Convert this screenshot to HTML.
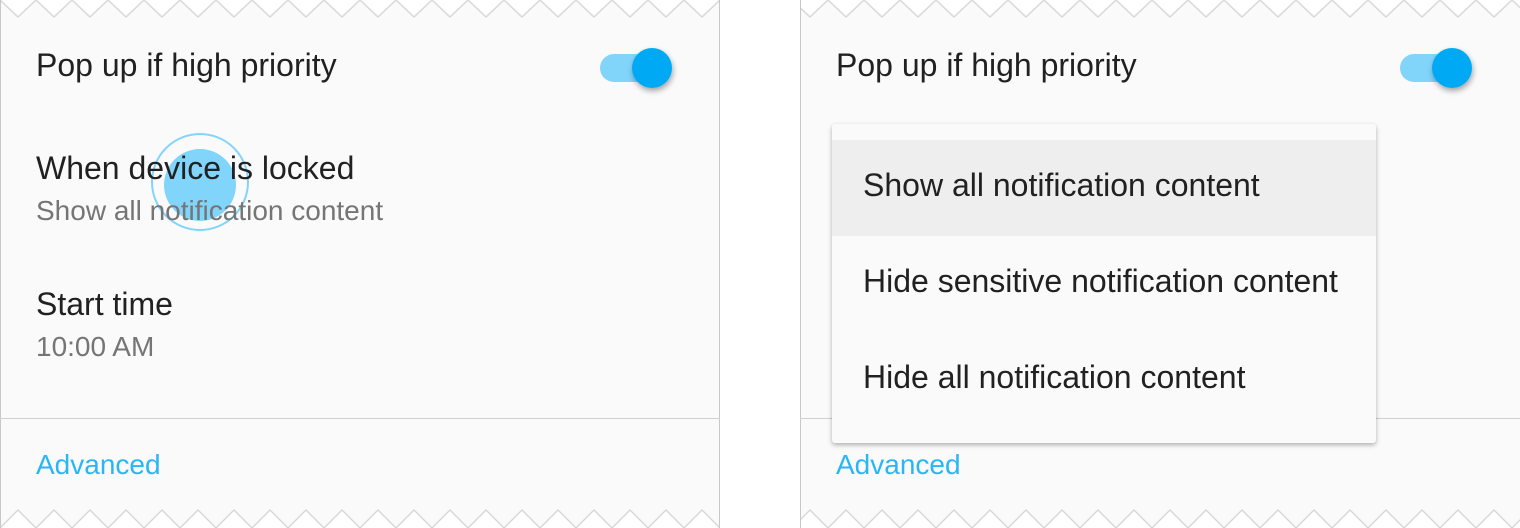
<!DOCTYPE html>
<html><head><style>
html,body{margin:0;padding:0;width:1520px;height:528px;overflow:hidden;background:#fff;font-family:"Liberation Sans",sans-serif}
.p{position:absolute;top:0;height:528px;background:#fafafa;border-left:1px solid #c8c8c8;border-right:1px solid #c8c8c8;box-sizing:border-box}
.t{position:absolute;white-space:nowrap;color:#212121;font-size:32px}
.s{color:#757575;font-size:28px}
.a{color:#29b6f6;font-size:28px}
.zz{position:absolute;left:0}
</style></head><body>
<div class="p" style="left:0;width:720px"></div>
<div class="p" style="left:800px;width:721px"></div>
<svg class="zz" style="top:0" width="1520" height="20">
<defs><pattern id="z" width="36" height="20" patternUnits="userSpaceOnUse"><path d="M0 0 L18 17 L36 0 Z" fill="#fff"/><path d="M0 0 L18 17 L36 0" fill="none" stroke="#d8d8d8" stroke-width="1.5"/></pattern>
<pattern id="zb" width="36" height="20" patternUnits="userSpaceOnUse"><path d="M0 20 L18 2 L36 20 Z" fill="#fff"/><path d="M0 20 L18 2 L36 20" fill="none" stroke="#d8d8d8" stroke-width="1.5"/></pattern></defs>
<rect x="1" y="0" width="718" height="20" fill="url(#z)"/><rect x="801" y="0" width="719" height="20" fill="url(#z)"/>
</svg>
<svg class="zz" style="top:508px" width="1520" height="20">
<rect x="1" y="0" width="718" height="20" fill="url(#zb)"/><rect x="801" y="0" width="719" height="20" fill="url(#zb)"/>
</svg>
<div style="position:absolute;left:0;top:418px;width:720px;height:1px;background:#d0d0d0"></div>
<div style="position:absolute;left:800px;top:418px;width:720px;height:1px;background:#d0d0d0"></div>

<!-- left panel -->
<div class="t" style="left:36px;top:47px">Pop up if high priority</div>
<svg style="position:absolute;left:590px;top:40px" width="100" height="60">
<defs><filter id="sh" x="-50%" y="-50%" width="200%" height="200%"><feDropShadow dx="1" dy="3" stdDeviation="3" flood-color="#000" flood-opacity="0.35"/></filter></defs>
<rect x="10" y="14" width="54" height="28" rx="14" fill="#81d4fa"/>
<circle cx="62" cy="28" r="20" fill="#03a9f4" filter="url(#sh)"/></svg>
<svg style="position:absolute;left:140px;top:122px" width="120" height="120">
<circle cx="60" cy="60" r="48" fill="none" stroke="#81d4fa" stroke-width="2"/>
<circle cx="60" cy="63" r="36" fill="#81d4fa"/></svg>
<div class="t" style="left:36px;top:150px">When device is locked</div>
<div class="t s" style="left:36px;top:195px">Show all notification content</div>
<div class="t" style="left:36px;top:286px">Start time</div>
<div class="t s" style="left:36px;top:331px">10:00 AM</div>
<div class="t a" style="left:36px;top:449px">Advanced</div>

<!-- right panel -->
<div class="t" style="left:836px;top:47px">Pop up if high priority</div>
<svg style="position:absolute;left:1390px;top:40px" width="100" height="60">
<rect x="10" y="14" width="54" height="28" rx="14" fill="#81d4fa"/>
<circle cx="62" cy="28" r="20" fill="#03a9f4" filter="url(#sh)"/></svg>
<div class="t a" style="left:836px;top:449px">Advanced</div>
<div style="position:absolute;left:832px;top:124px;width:544px;height:319px;background:#fafafa;border-radius:3px;box-shadow:0 2px 5px rgba(0,0,0,.3)">
<div style="position:absolute;left:0;top:16px;width:544px;height:96px;background:#eeeeee"></div>
<div class="t" style="left:31px;top:43px">Show all notification content</div>
<div class="t" style="left:31px;top:139px">Hide sensitive notification content</div>
<div class="t" style="left:31px;top:235px">Hide all notification content</div>
</div>
</body></html>
